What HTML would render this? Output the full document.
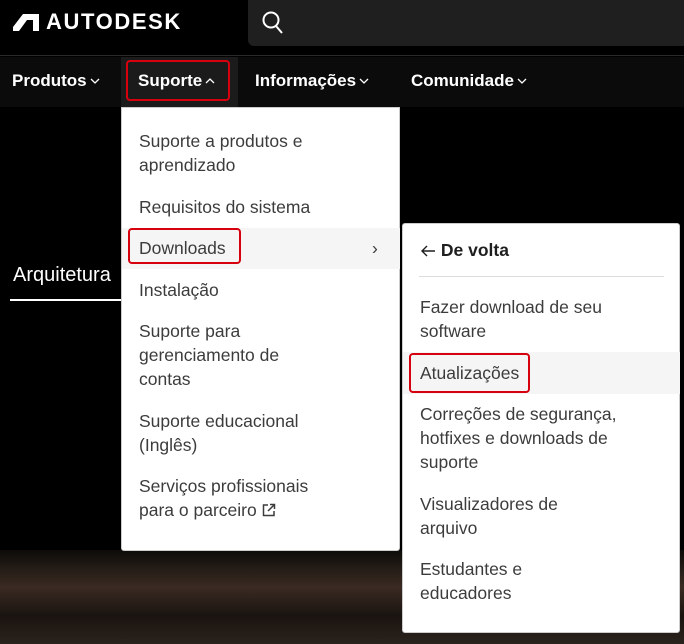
<!DOCTYPE html>
<html><head><meta charset="utf-8"><style>
*{margin:0;padding:0;box-sizing:border-box}
body{width:684px;height:644px;overflow:hidden;background:#000;position:relative;font-family:"Liberation Sans",sans-serif;}
.abs{position:absolute}
.hdr{left:0;top:0;width:684px;height:56px;background:#000;border-bottom:1px solid #2a2a2a}
.search{left:248px;top:0;width:436px;height:46px;background:#1f1f1f;border-radius:0 0 0 6px}
.nav{left:0;top:57px;width:684px;height:50px;background:#0b0b0b}
.nav span{position:absolute;top:14px;color:#fff;font-size:17px;font-weight:bold;white-space:nowrap}
.nav svg{vertical-align:2px;margin-left:3px}
.bg{left:0;top:550px;width:684px;height:94px;background:linear-gradient(180deg,#0d0b09 0%,#2a201a 25%,#3a2a22 40%,#1a1410 70%,#2a221c 100%)}
.menu{background:#fff;border:1px solid #ccc;border-radius:0 0 3px 3px}
.it{position:absolute;left:17px;color:#3c3c3c;font-size:17.5px;line-height:24px}
.red{position:absolute;border:2.5px solid #d6000f;border-radius:4px}
</style></head><body>
<div class="abs hdr"></div>
<div class="abs search"></div>
<svg class="abs" style="left:262px;top:10px" width="24" height="26" viewBox="0 0 24 26"><circle cx="9" cy="10" r="7.5" fill="none" stroke="#fff" stroke-width="2"/><line x1="14" y1="16" x2="20" y2="23" stroke="#fff" stroke-width="2"/></svg>
<svg class="abs" style="left:13px;top:14px" width="26" height="17" viewBox="0 0 26 17"><path d="M0 17 L0 13 L10 0 L26 0 L26 17 L20 17 L20 6 L14 6 L6 17 Z" fill="#fff"/></svg>
<div class="abs" style="left:46px;top:9px;color:#fff;font-weight:bold;font-size:22px;letter-spacing:1.6px">AUTODESK</div>
<div class="abs nav">
<div class="abs" style="left:121px;top:0;width:117px;height:50px;background:#1b1b1b"></div>
<span style="left:12px">Produtos<svg width="10" height="6" viewBox="0 0 10 6"><path d="M1 1L5 5L9 1" fill="none" stroke="#fff" stroke-width="1.3"/></svg></span>
<span style="left:138px">Suporte<svg width="10" height="6" viewBox="0 0 10 6"><path d="M1 5L5 1L9 5" fill="none" stroke="#fff" stroke-width="1.3"/></svg></span>
<span style="left:255px">Informações<svg width="10" height="6" viewBox="0 0 10 6"><path d="M1 1L5 5L9 1" fill="none" stroke="#fff" stroke-width="1.3"/></svg></span>
<span style="left:411px">Comunidade<svg width="10" height="6" viewBox="0 0 10 6"><path d="M1 1L5 5L9 1" fill="none" stroke="#fff" stroke-width="1.3"/></svg></span>
</div>
<div class="red" style="left:126px;top:60px;width:104px;height:41px"></div>
<div class="abs" style="left:13px;top:264px;color:#fff;font-size:20px">Arquitetura</div>
<div class="abs" style="left:10px;top:299px;width:111px;height:2px;background:#fff"></div>
<div class="abs bg"></div>

<div class="abs menu" style="left:121px;top:107px;width:279px;height:444px">
<div class="abs" style="left:0;top:120px;width:278px;height:41px;background:#f5f5f5"></div>
<div class="it" style="top:21px">Suporte a produtos e<br>aprendizado</div>
<div class="it" style="top:87px">Requisitos do sistema</div>
<div class="it" style="top:128px">Downloads</div>
<div class="it" style="left:250px;top:128px">›</div>
<div class="it" style="top:170px">Instalação</div>
<div class="it" style="top:211px">Suporte para<br>gerenciamento de<br>contas</div>
<div class="it" style="top:301px">Suporte educacional<br>(Inglês)</div>
<div class="it" style="top:366px">Serviços profissionais<br>para o parceiro <svg width="14" height="14" viewBox="0 0 14 14" style="vertical-align:-1px"><path d="M6 2H1.5V12.5H12V8M8 1.5H12.5V6M12.5 1.5L6 8" fill="none" stroke="#3c3c3c" stroke-width="1.5"/></svg></div>
</div>
<div class="red" style="left:128px;top:228px;width:113px;height:36px"></div>

<div class="abs menu" style="left:402px;top:223px;width:278px;height:410px;border-radius:3px">
<div class="abs" style="left:0;top:128px;width:277px;height:42px;background:#f5f5f5"></div>
<div class="it" style="top:14px;color:#1e1e1e;font-weight:bold"><svg width="16" height="12" viewBox="0 0 16 12" style="vertical-align:-1px"><path d="M15 6H2M7 1L2 6L7 11" fill="none" stroke="#1e1e1e" stroke-width="1.4"/></svg> De volta</div>
<div class="abs" style="left:16px;top:52px;width:245px;height:1px;background:#ddd"></div>
<div class="it" style="top:71px">Fazer download de seu<br>software</div>
<div class="it" style="top:137px">Atualizações</div>
<div class="it" style="top:178px">Correções de segurança,<br>hotfixes e downloads de<br>suporte</div>
<div class="it" style="top:268px">Visualizadores de<br>arquivo</div>
<div class="it" style="top:333px">Estudantes e<br>educadores</div>
</div>
<div class="red" style="left:409px;top:353px;width:121px;height:40px"></div>
</body></html>
